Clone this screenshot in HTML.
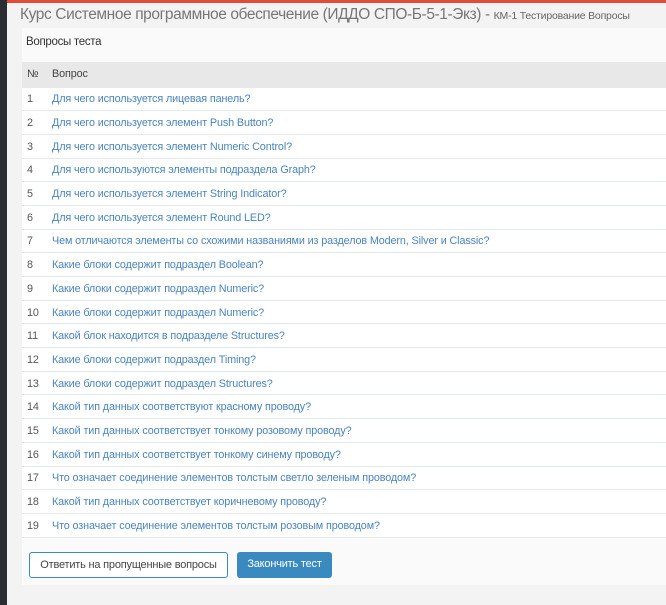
<!DOCTYPE html>
<html><head><meta charset="utf-8"><style>
*{margin:0;padding:0;box-sizing:border-box}
body{width:666px;height:605px;overflow:hidden;background:#f3f3f3;font-family:"Liberation Sans",sans-serif;position:relative}
.side{position:absolute;left:0;top:0;width:7px;height:605px;background:#2b2d30}
.top{position:absolute;left:7px;top:0;right:0;height:3px;background:#e04b3a}
h1{position:absolute;left:20px;top:6px;font-weight:normal;font-size:15.5px;color:#777;letter-spacing:-0.4px;white-space:nowrap}
h1 small{font-size:10.5px;color:#666;letter-spacing:-0.2px}
.panel{position:absolute;left:22px;top:28px;width:644px;height:557px;background:#fafafa}
.pt{position:absolute;left:4px;top:8px;font-size:11.5px;color:#333;letter-spacing:-0.3px}
table{position:absolute;left:0;top:34px;width:644px;border-collapse:collapse;font-size:10.8px;letter-spacing:-0.12px}
th{background:#e8e8e8;height:25px;text-align:left;font-weight:normal;color:#444}
td{height:23.7px;background:#fff;border-top:1.5px solid #e3e8ea;color:#555;padding-top:1px}
td:first-child,th:first-child{width:30px;padding-left:5px}
td a{color:#4a84bd;text-decoration:none}
.b1,.b2{position:absolute;top:524px;height:26px;font-size:11px;line-height:24px;text-align:center;border-radius:3px;letter-spacing:-0.2px}
.b1{left:7px;width:199px;border:1px solid #3a8ac0;background:#fff;color:#444}
.b2{left:215px;width:95px;background:#3a8ac0;color:#fff}
</style></head><body>
<div class="side"></div><div class="top"></div>
<h1>Курс Системное программное обеспечение (ИДДО СПО-Б-5-1-Экз) - <small>КМ-1 Тестирование Вопросы</small></h1>
<div class="panel">
<div class="pt">Вопросы теста</div>
<table>
<tr><th>№</th><th>Вопрос</th></tr>
<tr><td>1</td><td><a>Для чего используется лицевая панель?</a></td></tr>
<tr><td>2</td><td><a>Для чего используется элемент Push Button?</a></td></tr>
<tr><td>3</td><td><a>Для чего используется элемент Numeric Control?</a></td></tr>
<tr><td>4</td><td><a>Для чего используются элементы подраздела Graph?</a></td></tr>
<tr><td>5</td><td><a>Для чего используется элемент String Indicator?</a></td></tr>
<tr><td>6</td><td><a>Для чего используется элемент Round LED?</a></td></tr>
<tr><td>7</td><td><a>Чем отличаются элементы со схожими названиями из разделов Modern, Silver и Classic?</a></td></tr>
<tr><td>8</td><td><a>Какие блоки содержит подраздел Boolean?</a></td></tr>
<tr><td>9</td><td><a>Какие блоки содержит подраздел Numeric?</a></td></tr>
<tr><td>10</td><td><a>Какие блоки содержит подраздел Numeric?</a></td></tr>
<tr><td>11</td><td><a>Какой блок находится в подразделе Structures?</a></td></tr>
<tr><td>12</td><td><a>Какие блоки содержит подраздел Timing?</a></td></tr>
<tr><td>13</td><td><a>Какие блоки содержит подраздел Structures?</a></td></tr>
<tr><td>14</td><td><a>Какой тип данных соответствуют красному проводу?</a></td></tr>
<tr><td>15</td><td><a>Какой тип данных соответствует тонкому розовому проводу?</a></td></tr>
<tr><td>16</td><td><a>Какой тип данных соответствует тонкому синему проводу?</a></td></tr>
<tr><td>17</td><td><a>Что означает соединение элементов толстым светло зеленым проводом?</a></td></tr>
<tr><td>18</td><td><a>Какой тип данных соответствует коричневому проводу?</a></td></tr>
<tr><td>19</td><td><a>Что означает соединение элементов толстым розовым проводом?</a></td></tr>
<tr><td style="height:2px;padding:0"></td><td style="height:2px;padding:0"></td></tr>
</table>
<div class="b1">Ответить на пропущенные вопросы</div>
<div class="b2">Закончить тест</div>
</div>
</body></html>
